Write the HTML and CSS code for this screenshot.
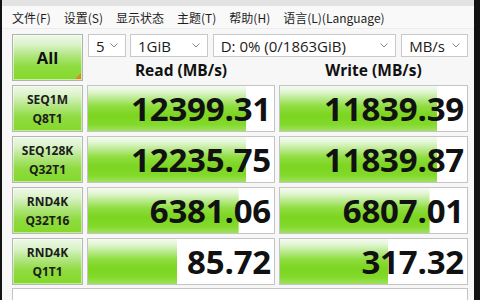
FILE: index.html
```html
<!DOCTYPE html>
<html lang="zh-CN">
<head>
<meta charset="utf-8">
<title>CrystalDiskMark</title>
<link rel="stylesheet" href="styles.css">
</head>
<body>
<div class="window">
  <div class="titlebar"></div>
  <nav class="menu">
    <span class="menu-item">文件(F)</span>
    <span class="menu-item">设置(S)</span>
    <span class="menu-item">显示状态</span>
    <span class="menu-item">主题(T)</span>
    <span class="menu-item">帮助(H)</span>
    <span class="menu-item">语言(L)(Language)</span>
  </nav>
  <main class="board">
    <button class="all">All<span class="corner"></span></button>
    <div class="controls">
      <div class="combos">
        <div class="combo combo-count"><span>5</span><svg class="chev" viewBox="0 0 8 5"><path d="M0.5 0.5 L4 4 L7.5 0.5"/></svg></div>
        <div class="combo combo-size"><span>1GiB</span><svg class="chev" viewBox="0 0 8 5"><path d="M0.5 0.5 L4 4 L7.5 0.5"/></svg></div>
        <div class="combo combo-drive"><span>D: 0% (0/1863GiB)</span><svg class="chev" viewBox="0 0 8 5"><path d="M0.5 0.5 L4 4 L7.5 0.5"/></svg></div>
        <div class="combo combo-unit"><span>MB/s</span><svg class="chev" viewBox="0 0 8 5"><path d="M0.5 0.5 L4 4 L7.5 0.5"/></svg></div>
      </div>
      <div class="heads">
        <div class="head">Read (MB/s)</div>
        <div class="head">Write (MB/s)</div>
      </div>
    </div>

    <div class="label">SEQ1M<br>Q8T1</div>
    <div class="cell" style="--fill:85%"><span class="val">12399.31</span></div>
    <div class="cell" style="--fill:84%"><span class="val">11839.39</span></div>

    <div class="label">SEQ128K<br>Q32T1</div>
    <div class="cell" style="--fill:85%"><span class="val">12235.75</span></div>
    <div class="cell" style="--fill:84%"><span class="val">11839.87</span></div>

    <div class="label">RND4K<br>Q32T16</div>
    <div class="cell" style="--fill:81%"><span class="val">6381.06</span></div>
    <div class="cell" style="--fill:80%"><span class="val">6807.01</span></div>

    <div class="label">RND4K<br>Q1T1</div>
    <div class="cell" style="--fill:48%"><span class="val">85.72</span></div>
    <div class="cell" style="--fill:58%"><span class="val">317.32</span></div>

    <div class="comment"></div>
  </main>
</div>
</body>
</html>
```
FILE: styles.css
```css
html, body {
  margin: 0;
  padding: 0;
  background: #111;
}

.window {
  width: 480px;
  height: 300px;
  box-sizing: border-box;
  border-left: 2px solid #121212;
  border-right: 6px solid #121212;
  background: #f7f7f7;
  overflow: hidden;
  display: flex;
  flex-direction: column;
}

.titlebar {
  height: 6px;
  background: #e3e3e3;
  flex: none;
}

.menu {
  height: 22px;
  flex: none;
  display: flex;
  align-items: center;
  gap: 13px;
  padding-left: 10px;
  font-family: "Noto Sans CJK SC", "Noto Sans", sans-serif;
  font-size: 12px;
  color: #1e1e1e;
  background: #f9f9f9;
  border-bottom: 1px solid #ececec;
}

.board {
  display: grid;
  grid-template-columns: 71px 188px 189px;
  grid-template-rows: repeat(5, 47px) 40px;
  column-gap: 4px;
  row-gap: 4px;
  padding: 5px 0 0 10px;
  font-family: "Open Sans", "Noto Sans", sans-serif;
}

.all {
  position: relative;
  margin: 0;
  padding: 0;
  border: 1px solid #aeb3ab;
  box-shadow: inset 0 0 0 1px rgba(255,255,255,0.55);
  background: linear-gradient(180deg, #eef8e8 0%, #d9f2c6 22%, #b2e681 45%, #8fdb40 70%, #84d92a 100%);
  font-family: "Open Sans", sans-serif;
  font-weight: 700;
  font-size: 16.5px;
  color: #111;
}

.corner {
  position: absolute;
  right: 1px;
  bottom: 1px;
  width: 0;
  height: 0;
  border-left: 6px solid transparent;
  border-bottom: 6px solid #e5822a;
}

.controls {
  grid-column: 2 / 4;
  display: flex;
  flex-direction: column;
}

.combos {
  display: flex;
  height: 23px;
  margin-left: 1px;
  gap: 5px;
}

.combo {
  box-sizing: border-box;
  height: 23px;
  background: #fff;
  border: 1px solid #c9c9c9;
  display: flex;
  align-items: center;
  justify-content: space-between;
  padding: 0 7px 0 7px;
  font-size: 15px;
  color: #1b1b1b;
}

.combo-count { width: 38px; margin-right: -1px; }
.combo-size { width: 78px; }
.combo-drive { width: 184px; }
.combo-unit { width: 67px; }

.chev {
  width: 8px;
  height: 5px;
  flex: none;
}

.chev path {
  fill: none;
  stroke: #8a8a8a;
  stroke-width: 1;
}

.heads {
  flex: 1;
  display: grid;
  grid-template-columns: 188px 189px;
  column-gap: 4px;
  align-items: end;
}

.head {
  text-align: center;
  font-weight: 700;
  font-size: 15.5px;
  line-height: 20px;
  color: #111;
  padding-bottom: 1px;
}

.label {
  box-sizing: border-box;
  border: 1px solid #b4b8b1;
  box-shadow: inset 0 0 0 1px rgba(255,255,255,0.5);
  background: linear-gradient(180deg, #eef8e8 0%, #d9f2c6 22%, #b2e681 45%, #8fdb40 70%, #84d92a 100%);
  display: flex;
  flex-direction: column;
  justify-content: center;
  text-align: center;
  font-weight: 700;
  font-size: 12px;
  line-height: 19px;
  color: #1c1c1c;
}

.cell {
  box-sizing: border-box;
  border: 1px solid #c4c4c4;
  background-color: #fff;
  background-image: linear-gradient(180deg, #f5fbf1 0%, #e3f6d4 12%, #b9ea8d 28%, #8fdd40 45%, #7cd520 65%, #82d92a 85%, #9fe25e 100%);
  background-repeat: no-repeat;
  background-size: var(--fill) 100%;
  text-align: right;
  padding-right: 3px;
}

.val {
  font-weight: 700;
  font-size: 33px;
  line-height: 45px;
  color: #111;
  letter-spacing: -0.2px;
}

.comment {
  grid-column: 1 / 4;
  background: #fff;
  border: 1px solid #c4c4c4;
  margin-top: -1px;
}
```
